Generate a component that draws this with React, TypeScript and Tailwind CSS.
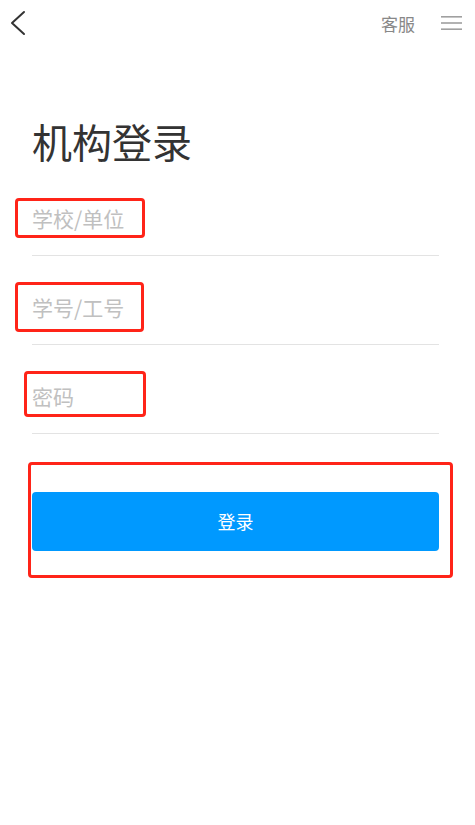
import React from 'react';

const cjk = { fontFamily: '"Noto Sans CJK SC", "Noto Sans", sans-serif' };

function Field({ placeholder, type = 'text' }: { placeholder: string; type?: string }) {
    return (
        <div className="flex flex-col justify-end h-[89px] border-b border-[#e3e3e3]">
            <input
                type={type}
                placeholder={placeholder}
                className="h-[46px] mb-[14px] w-full bg-transparent outline-none text-[21px] text-[#333] placeholder:text-[#c0c0c0]"
                style={cjk}
            />
        </div>
    );
}

export default function App() {
    return (
        <div className="relative w-[475px] h-[825px] bg-white overflow-hidden" style={cjk}>
            {/* Top bar */}
            <div className="flex items-center justify-between h-[46px] pl-[9px] pr-[13px]">
                <svg width="18" height="26" viewBox="0 0 18 26" fill="none">
                    <path d="M15 2 L3 13 L15 24" stroke="#333" strokeWidth="2" strokeLinecap="round" strokeLinejoin="round" />
                </svg>
                <div className="flex items-center gap-[26px]">
                    <span className="text-[17px] text-[#888] leading-none">客服</span>
                    <svg width="21" height="16" viewBox="0 0 21 16">
                        <rect x="0" y="1" width="21" height="1.6" fill="#a0a0a0" />
                        <rect x="0" y="7.2" width="21" height="1.6" fill="#a0a0a0" />
                        <rect x="0" y="13.4" width="21" height="1.6" fill="#a0a0a0" />
                    </svg>
                </div>
            </div>

            {/* Form */}
            <div className="pl-[32px] pr-[36px]">
                <h1 className="mt-[75px] mb-[6px] text-[40px] leading-[40px] text-[#333] font-normal">机构登录</h1>
                <Field placeholder="学校/单位" />
                <Field placeholder="学号/工号" />
                <Field placeholder="密码" type="password" />
                <button
                    className="mt-[58px] w-full h-[59px] rounded-[4px] bg-[#0099ff] text-white text-[18px]"
                    style={cjk}
                >
                    登录
                </button>
            </div>

            {/* Annotation boxes */}
            <div className="absolute left-[15px] top-[198px] w-[130px] h-[40px] border-[3px] border-[#ff2418] rounded-[4px]" />
            <div className="absolute left-[15px] top-[282px] w-[129px] h-[50px] border-[3px] border-[#ff2418] rounded-[4px]" />
            <div className="absolute left-[24px] top-[371px] w-[122px] h-[46px] border-[3px] border-[#ff2418] rounded-[4px]" />
            <div className="absolute left-[28px] top-[462px] w-[425px] h-[116px] border-[3px] border-[#ff2418] rounded-[4px]" />
        </div>
    );
}
